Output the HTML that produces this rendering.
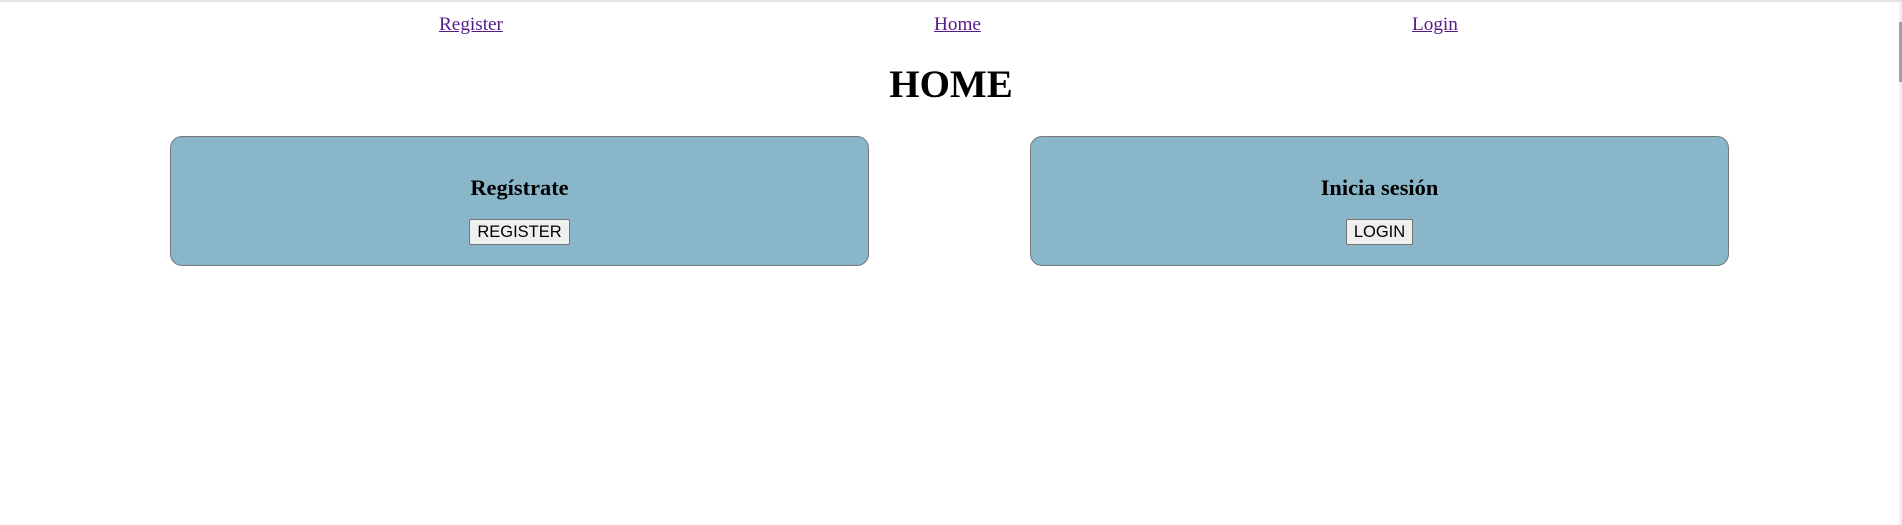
<!DOCTYPE html>
<html><head><meta charset="utf-8"><style>
html,body{margin:0;padding:0;width:1902px;height:525px;overflow:hidden;background:#fff;font-family:"Liberation Serif",serif;position:relative}
.top{position:absolute;left:0;top:0;width:1902px;height:2px;background:#e3e3e3}
.sb{position:absolute;left:1899px;top:2px;width:3px;height:523px;background:#f0f0f0}
.sbt{position:absolute;left:1899px;top:22px;width:3px;height:60px;background:#a0a0a0}
a{position:absolute;top:14px;font-size:19.2px;color:#551a8b;text-decoration:underline;line-height:22px}
h1{position:absolute;left:0;width:1902px;text-align:center;top:62px;margin:0;font-size:39px;line-height:46px;font-weight:bold}
.box{position:absolute;top:136px;width:697px;height:128px;background:#8ab6ca;border:1px solid #777;border-radius:12px;text-align:center}
.box h3{margin:38px 0 0;font-size:22.4px;line-height:26px;font-weight:bold}
.box button{margin-top:18px;font-family:"Liberation Sans",sans-serif;font-size:16.5px;height:26px;padding:0 7px;background:#efefef;border:1px solid #767676;border-radius:2px;color:#000;line-height:20px}
</style></head><body>
<div class="top"></div><div class="sb"></div><div class="sbt"></div>
<a href="#" style="left:439px">Register</a>
<a href="#" style="left:934px">Home</a>
<a href="#" style="left:1412px">Login</a>
<h1>HOME</h1>
<div class="box" style="left:170px"><h3>Regístrate</h3><button>REGISTER</button></div>
<div class="box" style="left:1030px"><h3>Inicia sesión</h3><button>LOGIN</button></div>
</body></html>
